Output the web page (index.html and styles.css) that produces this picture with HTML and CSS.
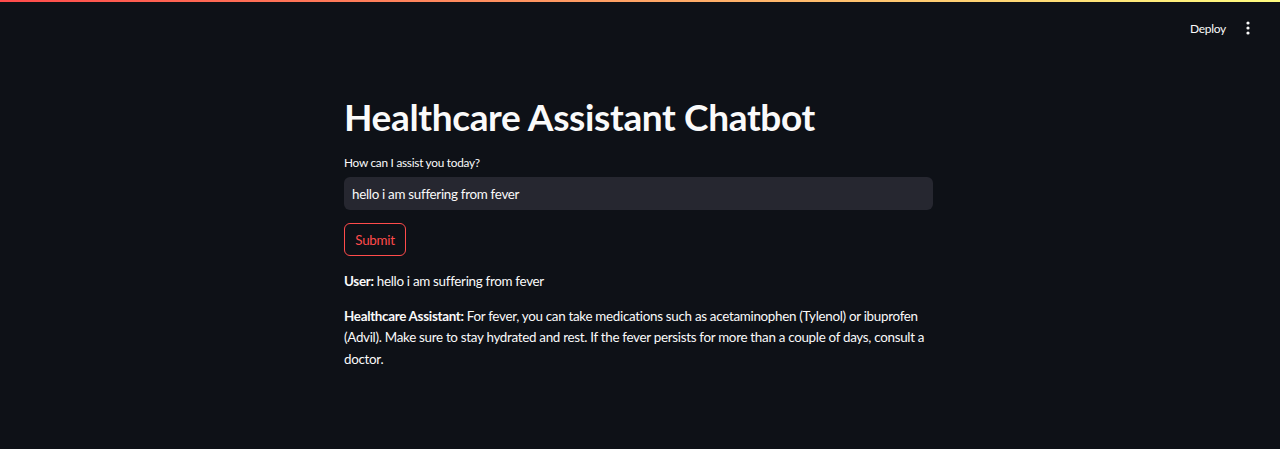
FILE: index.html
```html
<!DOCTYPE html>
<html lang="en">
<head>
<meta charset="utf-8">
<title>Healthcare Assistant Chatbot</title>
<link rel="stylesheet" href="styles.css">
</head>
<body>
<div class="decoration"></div>
<header class="toolbar">
  <span class="deploy">Deploy</span>
  <span class="menu" aria-label="Main menu">
    <svg width="4" height="14" viewBox="0 0 4 14"><circle cx="2" cy="2" r="1.6" fill="#fafafa"/><circle cx="2" cy="7" r="1.6" fill="#fafafa"/><circle cx="2" cy="12" r="1.6" fill="#fafafa"/></svg>
  </span>
</header>
<main class="main">
  <h1 class="title">Healthcare Assistant Chatbot</h1>
  <label class="label" for="q">How can I assist you today?</label>
  <div class="input-wrap"><input id="q" class="input" type="text" value="hello i am suffering from fever"></div>
  <button class="btn">Submit</button>
  <p class="msg"><strong>User:</strong> hello i am suffering from fever</p>
  <p class="msg"><strong>Healthcare Assistant:</strong> For fever, you can take medications such as acetaminophen (Tylenol) or ibuprofen (Advil). Make sure to stay hydrated and rest. If the fever persists for more than a couple of days, consult a doctor.</p>
</main>
</body>
</html>
```
FILE: styles.css
```css
* { box-sizing: border-box; }
html, body { margin: 0; padding: 0; }
body {
  background: #0e1117;
  color: #fafafa;
  font-family: Lato, "Liberation Sans", sans-serif;
  height: 449px;
  overflow: hidden;
}
.decoration {
  height: 2px;
  background: linear-gradient(90deg, #ff4b4b, #fffd80);
}
.toolbar {
  display: flex;
  justify-content: flex-end;
  align-items: center;
  height: 52px;
  padding-right: 30px;
  gap: 20px;
}
.deploy {
  font-size: 12px;
  letter-spacing: -0.3px;
  color: #fafafa;
}
.menu { display: flex; align-items: center; }
.main {
  width: 589px;
  margin-left: calc(50% - 296px);
  padding-top: 40px;
}
.title {
  font-size: 37px;
  font-weight: 700;
  margin: 0;
  line-height: 46px;
  letter-spacing: -0.35px;
}
.label {
  display: block;
  font-size: 11.8px;
  letter-spacing: -0.25px;
  margin-top: 15px;
  line-height: 16px;
}
.input-wrap { margin-top: 6px; }
.input {
  width: 100%;
  height: 33px;
  border: none;
  border-radius: 6px;
  background: #262730;
  color: #fafafa;
  font-family: inherit;
  font-size: 13.4px;
  letter-spacing: -0.3px;
  padding: 0 8px;
  outline: none;
}
.btn {
  display: block;
  margin-top: 13px;
  height: 33px;
  width: 62px;
  padding: 0;
  background: transparent;
  border: 1px solid #ff4b4b;
  border-radius: 6px;
  color: #ff4b4b;
  font-family: inherit;
  font-size: 13.4px;
  letter-spacing: -0.3px;
}
.msg {
  font-size: 13.4px;
  letter-spacing: -0.3px;
  line-height: 21.5px;
  margin: 15px 0 0;
}
.msg + .msg { margin-top: 13px; }
.msg strong { font-weight: 700; }
```
